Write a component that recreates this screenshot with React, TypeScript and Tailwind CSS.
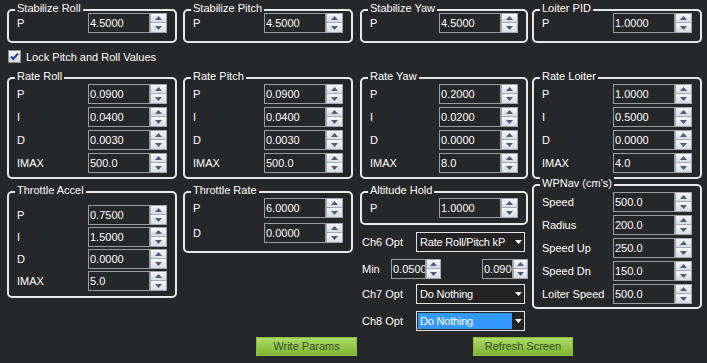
import type { ReactNode } from 'react';

type Field = { label: string; value: string };

function Arrow({ up }: { up?: boolean }) {
  return (
    <svg width="7" height="4" viewBox="0 0 7 4" className="block">
      <path d={up ? 'M0 4 L3.5 0 L7 4 Z' : 'M0 0 L7 0 L3.5 4 Z'} fill="#4b5b7c" />
    </svg>
  );
}

function Spinner({ width = 'w-[17px]' }: { width?: string }) {
  return (
    <div className={`${width} h-[20px] flex flex-col`}>
      <div className="h-[10px] flex items-center justify-center border border-[#a3aab6] bg-gradient-to-b from-[#f6f7f9] to-[#d8dce4]">
        <Arrow up />
      </div>
      <div className="h-[10px] flex items-center justify-center border border-t-0 border-[#a3aab6] bg-gradient-to-b from-[#f6f7f9] to-[#d8dce4]">
        <Arrow />
      </div>
    </div>
  );
}

function Numeric({ value, box = 'w-[62px]', spin = 'w-[17px]' }: { value: string; box?: string; spin?: string }) {
  return (
    <div className="flex h-[20px] shrink-0">
      <div className={`${box} h-full border border-[#9d9d9d] bg-[#262728] overflow-hidden whitespace-nowrap pl-[1px] leading-[18px]`}>
        {value}
      </div>
      <Spinner width={spin} />
    </div>
  );
}

function Row({ label, value }: Field) {
  return (
    <div className="flex items-center h-[20px]">
      <span className="flex-1 leading-[20px]">{label}</span>
      <Numeric value={value} />
    </div>
  );
}

function GroupBox({ title, className, children }: { title: string; className: string; children: ReactNode }) {
  return (
    <div className={`relative border-2 border-[#e9e9e9] rounded-[5px] flex flex-col pl-[8px] pr-[8px] ${className}`}>
      <span className="absolute -top-[9px] left-[6px] px-[2px] bg-[#262728] leading-[13px] whitespace-nowrap">{title}</span>
      {children}
    </div>
  );
}

function Combo({ value, selected }: { value: string; selected?: boolean }) {
  return (
    <div className="w-[109px] h-[20px] flex border border-[#e4e4e4] bg-[#232323]">
      <div className="flex-1 overflow-hidden whitespace-nowrap pl-[1px] pt-[1px]">
        <div className={`h-[16px] leading-[16px] pl-[2px] tracking-[-0.2px] ${selected ? 'bg-[#3399ff]' : ''}`}>{value}</div>
      </div>
      <div className="w-[12px] flex items-center justify-center">
        <svg width="7" height="4" viewBox="0 0 7 4">
          <path d="M0 0 L7 0 L3.5 4 Z" fill="#ffffff" />
        </svg>
      </div>
    </div>
  );
}

function ChRow({ label, value, selected, className }: { label: string; value: string; selected?: boolean; className: string }) {
  return (
    <div className={`flex items-center h-[20px] ${className}`}>
      <span className="w-[56px] pl-[2px]">{label}</span>
      <Combo value={value} selected={selected} />
    </div>
  );
}

const rateRoll: Field[] = [
  { label: 'P', value: '0.0900' },
  { label: 'I', value: '0.0400' },
  { label: 'D', value: '0.0030' },
  { label: 'IMAX', value: '500.0' },
];
const rateYaw: Field[] = [
  { label: 'P', value: '0.2000' },
  { label: 'I', value: '0.0200' },
  { label: 'D', value: '0.0000' },
  { label: 'IMAX', value: '8.0' },
];
const rateLoiter: Field[] = [
  { label: 'P', value: '1.0000' },
  { label: 'I', value: '0.5000' },
  { label: 'D', value: '0.0000' },
  { label: 'IMAX', value: '4.0' },
];
const throttleAccel: Field[] = [
  { label: 'P', value: '0.7500' },
  { label: 'I', value: '1.5000' },
  { label: 'D', value: '0.0000' },
  { label: 'IMAX', value: '5.0' },
];
const wpNav: Field[] = [
  { label: 'Speed', value: '500.0' },
  { label: 'Radius', value: '200.0' },
  { label: 'Speed Up', value: '250.0' },
  { label: 'Speed Dn', value: '150.0' },
  { label: 'Loiter Speed', value: '500.0' },
];

export default function App() {
  return (
    <div className="w-[707px] h-[363px] overflow-hidden bg-[#262728] text-white text-[11px] font-['Liberation_Sans',Arial,sans-serif] select-none">
      {/* Stabilize row */}
      <div className="flex pt-[9px] pl-[7px]">
        <GroupBox title="Stabilize Roll" className="w-[170px] pt-[2px] pb-[8px]">
          <Row label="P" value="4.5000" />
        </GroupBox>
        <GroupBox title="Stabilize Pitch" className="ml-[6px] w-[170px] pt-[2px] pb-[8px]">
          <Row label="P" value="4.5000" />
        </GroupBox>
        <GroupBox title="Stabilize Yaw" className="ml-[7px] w-[168px] pt-[2px] pb-[8px]">
          <Row label="P" value="4.5000" />
        </GroupBox>
        <GroupBox title="Loiter PID" className="ml-[4px] w-[170px] pt-[2px] pb-[8px]">
          <Row label="P" value="1.0000" />
        </GroupBox>
      </div>

      {/* Lock checkbox */}
      <div className="flex items-center gap-[5px] mt-[7px] pl-[8px] h-[13px]">
        <div className="w-[13px] h-[13px] border border-[#8e8f8f] bg-gradient-to-b from-[#f4f4f4] to-[#dadada] flex items-center justify-center">
          <svg width="11" height="11" viewBox="0 0 11 11">
            <path d="M2 5.5 L4.3 8 L9 2.5" stroke="#24429b" strokeWidth="2" fill="none" />
          </svg>
        </div>
        <span className="leading-[13px] mt-[1px]">Lock Pitch and Roll Values</span>
      </div>

      {/* Rate row */}
      <div className="flex mt-[14px] pl-[7px]">
        <GroupBox title="Rate Roll" className="w-[170px] pt-[5px] pb-[4px] gap-[3px]">
          {rateRoll.map((f) => <Row key={f.label} {...f} />)}
        </GroupBox>
        <GroupBox title="Rate Pitch" className="ml-[6px] w-[170px] pt-[5px] pb-[4px] gap-[3px]">
          {rateRoll.map((f) => <Row key={f.label} {...f} />)}
        </GroupBox>
        <GroupBox title="Rate Yaw" className="ml-[7px] w-[168px] pt-[5px] pb-[4px] gap-[3px]">
          {rateYaw.map((f) => <Row key={f.label} {...f} />)}
        </GroupBox>
        <GroupBox title="Rate Loiter" className="ml-[4px] w-[170px] pt-[5px] pb-[4px] gap-[3px]">
          {rateLoiter.map((f) => <Row key={f.label} {...f} />)}
        </GroupBox>
      </div>

      {/* Lower section */}
      <div className="flex items-start mt-[5px] pl-[7px] h-[153px]">
        <GroupBox title="Throttle Accel" className="mt-[7px] w-[170px] pt-[12px] pb-[5px] gap-[2px]">
          {throttleAccel.map((f) => <Row key={f.label} {...f} />)}
        </GroupBox>
        <GroupBox title="Throttle Rate" className="mt-[7px] ml-[6px] w-[170px] pt-[5px] pb-[8px] gap-[5px]">
          <Row label="P" value="6.0000" />
          <Row label="D" value="0.0000" />
        </GroupBox>

        <div className="mt-[7px] ml-[7px] w-[168px] flex flex-col">
          <GroupBox title="Altitude Hold" className="pt-[5px] pb-[5px]">
            <Row label="P" value="1.0000" />
          </GroupBox>
          <ChRow label="Ch6 Opt" value="Rate Roll/Pitch kP" className="mt-[7px]" />
          <div className="flex items-center h-[20px] mt-[7px]">
            <span className="w-[31px] pl-[2px]">Min</span>
            <Numeric value="0.0500" box="w-[35px]" spin="w-[15px]" />
            <div className="ml-[41px]">
              <Numeric value="0.0900" box="w-[31px]" spin="w-[15px]" />
            </div>
          </div>
          <ChRow label="Ch7 Opt" value="Do Nothing" className="mt-[5px]" />
          <ChRow label="Ch8 Opt" value="Do Nothing" selected className="mt-[7px]" />
        </div>

        <GroupBox title="WPNav (cm's)" className="ml-[4px] w-[170px] pt-[6px] pb-[3px] gap-[3px]">
          {wpNav.map((f) => <Row key={f.label} {...f} />)}
        </GroupBox>
      </div>

      {/* Buttons */}
      <div className="flex pl-[256px] gap-[116px]">
        <button className="w-[101px] h-[19px] border border-[#8cbb48] bg-gradient-to-b from-[#addb64] to-[#80b531] text-[#3a4a28] leading-[17px]">
          Write Params
        </button>
        <button className="w-[100px] h-[19px] border border-[#8cbb48] bg-gradient-to-b from-[#addb64] to-[#80b531] text-[#3a4a28] leading-[17px]">
          Refresh Screen
        </button>
      </div>
    </div>
  );
}
